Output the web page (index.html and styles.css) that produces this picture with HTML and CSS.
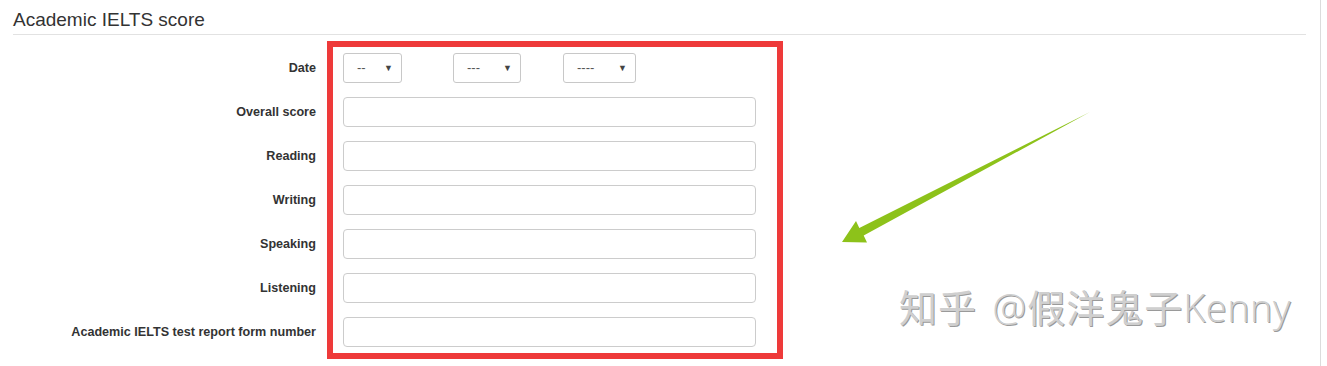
FILE: index.html
```html
<!DOCTYPE html>
<html>
<head>
<meta charset="utf-8">
<link rel="stylesheet" href="styles.css">
</head>
<body>
<div class="page">
  <div class="section">
    <h2 class="title">Academic IELTS score</h2>
    <div class="form">
      <div class="labels">
        <div class="label">Date</div>
        <div class="label">Overall score</div>
        <div class="label">Reading</div>
        <div class="label">Writing</div>
        <div class="label">Speaking</div>
        <div class="label">Listening</div>
        <div class="label">Academic IELTS test report form number</div>
      </div>
      <div class="highlight">
        <div class="date-row">
          <div class="select s-day"><span>--</span><span class="caret">▼</span></div>
          <div class="select s-month"><span>---</span><span class="caret">▼</span></div>
          <div class="select s-year"><span>----</span><span class="caret">▼</span></div>
        </div>
        <div class="input"></div>
        <div class="input"></div>
        <div class="input"></div>
        <div class="input"></div>
        <div class="input"></div>
        <div class="input"></div>
      </div>
    </div>
  </div>
  <svg class="arrow" width="1327" height="366" viewBox="0 0 1327 366">
    <polygon points="842,242 856,221 859.3,228 1090,112 863.7,235.6 867,242.5" fill="#8dc21a"/>
  </svg>
  <div class="watermark">知乎 <span class="wm-at">@</span>假洋鬼子<span class="wm-latin">Kenny</span></div>
</div>
</body>
</html>
```
FILE: styles.css
```css
html, body {
  margin: 0;
  padding: 0;
  background: #ffffff;
}
.page {
  position: relative;
  width: 1327px;
  height: 366px;
  overflow: hidden;
  font-family: "Liberation Sans", Arial, sans-serif;
  color: #333;
}
.section {
  width: 1321px;
  height: 366px;
  border-right: 1px solid #dcdcdc;
  box-sizing: border-box;
  padding-top: 9px;
}
.title {
  margin: 0 14px 0 13px;
  font-size: 19px;
  font-weight: normal;
  line-height: 22px;
  color: #333;
  padding-bottom: 3px;
  border-bottom: 1px solid #e2e2e2;
}
.form {
  display: flex;
  margin-top: 6px;
}
.labels {
  width: 316px;
  display: flex;
  flex-direction: column;
  gap: 14px;
  padding-top: 12px;
  margin-right: 11px;
}
.label {
  height: 30px;
  line-height: 30px;
  text-align: right;
  font-size: 12.6px;
  font-weight: bold;
  color: #333;
  white-space: nowrap;
}
.highlight {
  width: 413px;
  border: 6.5px solid #ee3a3a;
  padding: 5.5px 21px 6px 10px;
  display: flex;
  flex-direction: column;
  gap: 14px;
}
.date-row {
  display: flex;
  height: 30px;
}
.select {
  height: 30px;
  box-sizing: border-box;
  border: 1px solid #c8c8c8;
  border-radius: 3px;
  display: flex;
  align-items: center;
  justify-content: space-between;
  padding: 0 8px 0 13px;
  font-size: 13px;
  color: #555;
}
.caret {
  font-size: 9px;
  color: #444;
}
.s-day { width: 59px; margin-right: 51px; }
.s-month { width: 68px; margin-right: 42px; }
.s-year { width: 73px; }
.input {
  height: 30px;
  box-sizing: border-box;
  border: 1px solid #cccccc;
  border-radius: 4px;
  background: #fff;
}
.arrow {
  position: absolute;
  left: 0;
  top: 0;
}
.watermark {
  position: absolute;
  left: 899px;
  top: 282px;
  font-family: "Noto Sans CJK SC", "Liberation Sans", sans-serif;
  font-size: 38px;
  line-height: 48px;
  letter-spacing: 1px;
  color: #cfcfcf;
  text-shadow: 1px 1px 0 #9a9a9a;
  white-space: nowrap;
}
.wm-at {
  font-family: "Open Sans", sans-serif;
  font-weight: 300;
  margin-left: 6px;
}
.wm-latin {
  font-family: "Open Sans", sans-serif;
  font-weight: 300;
  letter-spacing: 0.5px;
}
```
